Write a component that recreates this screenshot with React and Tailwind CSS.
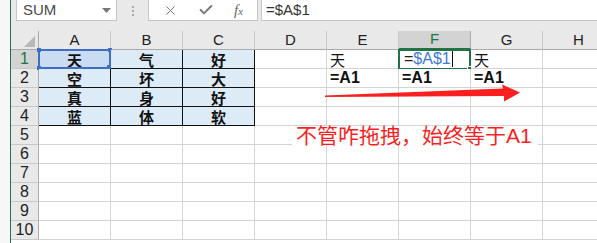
import { X, Check } from 'lucide-react';

const FONT = { fontFamily: '"Liberation Sans", "Noto Sans CJK SC", sans-serif' };
const CJK = { fontFamily: '"Noto Sans CJK SC", "Liberation Sans", sans-serif' };

const COLS = ['A', 'B', 'C', 'D', 'E', 'F', 'G', 'H'];

const DATA = {
  1: { A: '天', B: '气', C: '好', E: '天', G: '天' },
  2: { A: '空', B: '坏', C: '大', E: '=A1', F: '=A1', G: '=A1' },
  3: { A: '真', B: '身', C: '好' },
  4: { A: '蓝', B: '体', C: '软' },
};

function Cell({ row, col }) {
  const inRange = row <= 4 && ['A', 'B', 'C'].includes(col);
  const value = DATA[row]?.[col];
  const isRef = row === 1 && col === 'A';
  const isActive = row === 1 && col === 'F';
  const isFormula = row === 2 && ['E', 'F', 'G'].includes(col);

  let cls = 'relative w-[72px] shrink-0 h-full border-r border-b flex items-center overflow-visible ';
  if (inRange) {
    cls += 'border-[#111] justify-center ' + (isRef ? 'bg-[#c9dcf1]' : 'bg-[#ddebf7]');
  } else {
    cls += 'border-[#d4d4d4] bg-white pl-[3px]';
  }

  return (
    <div className={cls}>
      {value && (
        <span
          className={inRange ? 'text-[15px] text-[#111] font-semibold leading-[15px]' : isFormula ? 'text-[16px] font-bold text-[#111] leading-[16px]' : 'text-[15px] text-[#111] leading-[15px]'}
          style={inRange || !isFormula ? CJK : FONT}
        >
          {value}
        </span>
      )}
      {isRef && (
        <div className="absolute -left-px -top-px w-[73px] h-[20px] border-2 border-[#3f6fc4]">
          <div className="absolute -left-[3px] -top-[3px] w-[4px] h-[4px] bg-[#3f6fc4]" />
          <div className="absolute -right-[3px] -top-[3px] w-[4px] h-[4px] bg-[#3f6fc4]" />
          <div className="absolute -left-[3px] -bottom-[3px] w-[4px] h-[4px] bg-[#3f6fc4]" />
          <div className="absolute -right-[4px] -bottom-[4px] w-[6px] h-[6px] bg-[#3f6fc4]" />
        </div>
      )}
      {isActive && (
        <>
          <span className="text-[16px] leading-none flex items-center pl-[2px]" style={FONT}>
            <span className="text-[#222]">=</span>
            <span className="text-[#3f78d6]">$A$1</span>
            <span className="ml-px w-px h-[16px] bg-[#111]" />
          </span>
          <div className="absolute -left-px -top-px w-[73px] h-[21px] border-2 border-[#217346]">
            <div className="absolute -right-[4px] -bottom-[4px] w-[6px] h-[6px] bg-[#217346] border border-white" />
          </div>
        </>
      )}
    </div>
  );
}

export default function App() {
  return (
    <div className="w-[597px] h-[243px] overflow-hidden bg-white flex relative" style={FONT}>
      {/* left strip + green edge */}
      <div className="w-[10px] shrink-0 bg-[#f7f7f7]" />
      <div className="w-px shrink-0 bg-[#217346]" />

      <div className="flex-1 flex flex-col min-w-0">
        {/* formula bar */}
        <div className="h-[31px] bg-[#e9e9e9] flex items-start shrink-0">
          <div className="ml-[5px] w-[101px] h-[21px] bg-white border border-t-0 border-[#c6c6c6] flex items-center justify-between pl-[6px] pr-[5px]">
            <span className="text-[15px] text-[#4a4a4a]">SUM</span>
            <svg width="9" height="5" viewBox="0 0 9 5"><path d="M0 0h9L4.5 5z" fill="#777" /></svg>
          </div>
          <div className="w-[31px] h-[21px] flex flex-col items-center justify-center gap-[2px]">
            <div className="w-[2px] h-[2px] bg-[#aaa]" />
            <div className="w-[2px] h-[2px] bg-[#aaa]" />
            <div className="w-[2px] h-[2px] bg-[#aaa]" />
          </div>
          <div className="w-[110px] h-[21px] bg-white border border-t-0 border-[#c6c6c6] flex items-center justify-around px-[4px] text-[#7a7a7a]">
            <X className="w-[15px] h-[15px]" strokeWidth={1.6} />
            <Check className="w-[16px] h-[16px]" strokeWidth={3} />
            <span className="text-[15px] italic text-[#666]" style={{ fontFamily: '"Liberation Serif", serif' }}>
              f<span className="text-[11px]">x</span>
            </span>
          </div>
          <div className="ml-[3px] flex-1 h-[21px] bg-white border border-t-0 border-r-0 border-[#c6c6c6] flex items-center pl-[4px]">
            <span className="text-[15px] text-[#333]">=$A$1</span>
          </div>
        </div>

        {/* column headers */}
        <div className="h-[19px] flex shrink-0 bg-[#e9e9e9]">
          <div className="w-[28px] shrink-0 h-full border-r border-b border-[#ababab] flex items-end justify-end pr-[3px] pb-[2px]">
            <svg width="11" height="11" viewBox="0 0 11 11"><path d="M11 0v11H0z" fill="#b8b8b8" /></svg>
          </div>
          {COLS.map((c) => (
            <div
              key={c}
              className={
                c === 'F'
                  ? 'w-[72px] shrink-0 h-full bg-[#d3d3d3] border-r border-[#ababab] border-b-2 border-b-[#217346] flex items-center justify-center text-[15px] text-[#217346]'
                  : 'w-[72px] shrink-0 h-full border-r border-b border-[#c8c8c8] border-b-[#ababab] flex items-center justify-center text-[15px] text-[#222]'
              }
            >
              {c}
            </div>
          ))}
        </div>

        {/* rows */}
        {Array.from({ length: 10 }, (_, i) => i + 1).map((r) => (
          <div key={r} className="h-[19px] flex shrink-0">
            <div
              className={
                'w-[28px] shrink-0 h-full border-r border-b border-r-[#ababab] border-b-[#c8c8c8] flex items-center justify-center text-[16px] ' +
                (r === 1 ? 'bg-[#d3d3d3] text-[#217346]' : 'bg-[#e9e9e9] text-[#222]')
              }
            >
              {r}
            </div>
            {COLS.map((c) => (
              <Cell key={c} row={r} col={c} />
            ))}
          </div>
        ))}
      </div>

      {/* red drag arrow */}
      <svg className="absolute left-0 top-0 pointer-events-none" width="597" height="243" viewBox="0 0 597 243">
        <polygon points="325,95.5 503,88.5 502,84.5 520,92.5 504,101.5 504,96 325,97" fill="#fb1f1f" />
      </svg>

      {/* note text box */}
      <div className="absolute left-[292px] top-[126px] h-[19px] w-[246px] bg-white flex items-center pl-[4px]">
        <span className="text-[21px] leading-none text-[#fb1f1f] whitespace-nowrap" style={FONT}>
          不管咋拖拽，始终等于A1
        </span>
      </div>
    </div>
  );
}
